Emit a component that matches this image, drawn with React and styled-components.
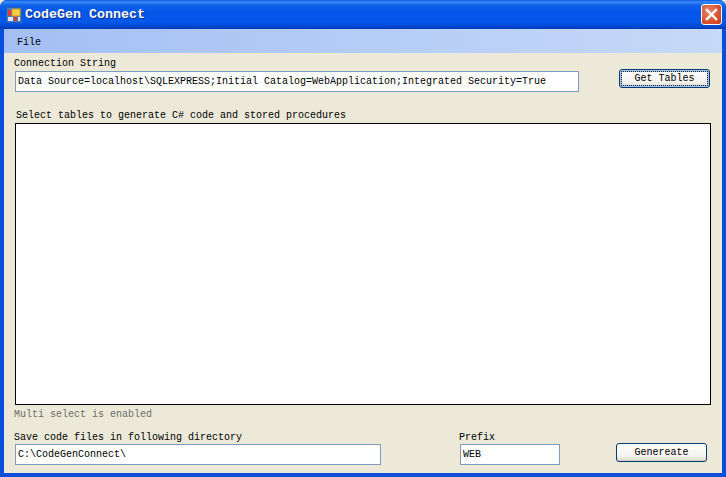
import React from 'react'
import styled, { createGlobalStyle } from 'styled-components'

const GlobalStyle = createGlobalStyle`
  html, body {
    margin: 0;
    padding: 0;
    background: #ece9d8;
    overflow: hidden;
  }
`

const AppIcon = () => (
  <svg width="16" height="16" viewBox="0 0 16 16">
    <rect x="0.5" y="0.5" width="15" height="15" fill="#3f7ad0" stroke="#2c5fb0" />
    <rect x="2" y="3" width="3" height="6" fill="#e23b2e" />
    <rect x="6" y="2" width="8" height="7" fill="#f8d040" stroke="#c89818" />
    <rect x="2" y="10" width="5" height="4" fill="#dfe8f5" />
    <rect x="8" y="10" width="3" height="4" fill="#e23b2e" />
    <rect x="12" y="10" width="2" height="4" fill="#dfe8f5" />
  </svg>
)

const App = () => {
  return (
    <Window>
      <GlobalStyle />
      <TitleBar>
        <AppIcon />
        <Title>CodeGen Connect</Title>
        <CloseButton>
          <svg width="21" height="21" viewBox="0 0 21 21">
            <path d="M6 6 L15 15 M15 6 L6 15" stroke="#fff" strokeWidth="2.4" strokeLinecap="square" />
          </svg>
        </CloseButton>
      </TitleBar>
      <Frame>
        <MenuBar>
          <MenuItem>File</MenuItem>
        </MenuBar>
        <Body>
          <Label>Connection String</Label>
          <TopRow>
            <TextBox $width={564} defaultValue="Data Source=localhost\SQLEXPRESS;Initial Catalog=WebApplication;Integrated Security=True" />
            <Button $focused>Get Tables</Button>
          </TopRow>
          <Label $indent={2} $top={17}>Select tables to generate C# code and stored procedures</Label>
          <TableList />
          <Hint>Multi select is enabled</Hint>
          <BottomRow>
            <Field>
              <Label>Save code files in following directory</Label>
              <TextBox $width={366} defaultValue="C:\CodeGenConnect\" />
            </Field>
            <PrefixField>
              <Label>Prefix</Label>
              <TextBox $width={100} defaultValue="WEB" />
            </PrefixField>
            <Button>Genereate</Button>
          </BottomRow>
        </Body>
      </Frame>
    </Window>
  )
}

export default App

const mono = `"Liberation Mono", "DejaVu Sans Mono", monospace`

const Window = styled.div`
  width: 726px;
  height: 477px;
  display: flex;
  flex-direction: column;
  background: #0a4fdc;
  border-radius: 7px 7px 0 0;
  overflow: hidden;
  font-family: ${mono};
  font-size: 10px;
  color: #000;
`

const TitleBar = styled.div`
  height: 29px;
  flex: none;
  box-sizing: border-box;
  display: flex;
  align-items: center;
  padding: 0 5px 0 6px;
  background: linear-gradient(
    to bottom,
    #0a57e0 0,
    #3b8cf8 2px,
    #0f62ea 5px,
    #0355e6 12px,
    #0358ea 22px,
    #0346cf 27px,
    #0336b0 29px
  );
`

const Title = styled.div`
  margin-left: 3px;
  flex: 1;
  font-size: 13.33px;
  font-weight: bold;
  color: #fff;
  text-shadow: 1px 1px 0 #0a2f90;
`

const CloseButton = styled.div`
  width: 21px;
  height: 21px;
  display: flex;
  border: 1px solid #fff;
  border-radius: 3px;
  margin: -1px -1px 0 0;
  background: radial-gradient(circle at 35% 35%, #e8856a, #d9522f 60%, #c23a18);
  box-sizing: border-box;

  svg {
    margin: -1px;
    flex: none;
  }
`

const Frame = styled.div`
  flex: 1;
  margin: 0 4px 4px;
  display: flex;
  flex-direction: column;
  background: #ece9d8;
`

const MenuBar = styled.div`
  height: 24px;
  flex: none;
  display: flex;
  align-items: center;
  padding-left: 13px;
  background: linear-gradient(to right, #a3bff4, #c6d9f8);
`

const MenuItem = styled.span`
  position: relative;
  top: 1px;
`

const Body = styled.div`
  flex: 1;
  display: flex;
  flex-direction: column;
  padding: 4px 11px 0 10px;
`

const Label = styled.div`
  height: 13px;
  line-height: 13px;
  margin-left: ${(p) => p.$indent || 0}px;
  margin-top: ${(p) => p.$top || 0}px;
  white-space: nowrap;
`

const TopRow = styled.div`
  display: flex;
  align-items: flex-start;
  padding-left: 1px;
  margin-top: 1px;

  button {
    margin: -2px 0 0 40px;
  }
`

const TextBox = styled.input`
  width: ${(p) => p.$width}px;
  height: 21px;
  box-sizing: border-box;
  border: 1px solid #7f9db9;
  padding: 0 2px;
  margin: 0;
  background: #fff;
  font-family: ${mono};
  font-size: 10px;
  color: #000;
  outline: none;
`

const Button = styled.button`
  width: 91px;
  height: 19px;
  padding: 0;
  border-radius: 3px;
  box-sizing: border-box;
  border: 1px solid #003c74;
  background: linear-gradient(to bottom, #fff, #f4f3ee 70%, #dcd8cc);
  font-family: ${mono};
  font-size: 10px;
  color: #000;
  box-shadow: ${(p) => (p.$focused ? 'inset 0 0 0 2px #a8c4ec' : 'inset 0 -1px 0 #d6d0c5')};
  outline: ${(p) => (p.$focused ? '1px dotted #222' : 'none')};
  outline-offset: -3px;
`

const TableList = styled.div`
  height: 282px;
  width: 696px;
  margin: 1px 0 0 1px;
  box-sizing: border-box;
  border: 1px solid #000;
  background: #fff;
`

const Hint = styled.div`
  height: 13px;
  line-height: 13px;
  margin-top: 3px;
  color: #6d6d6d;
`

const BottomRow = styled.div`
  display: flex;
  align-items: flex-end;
  margin-top: 10px;
`

const Field = styled.div`
  display: flex;
  flex-direction: column;
  align-items: flex-start;

  input {
    margin-left: 1px;
  }
`

const PrefixField = styled(Field)`
  margin-left: 78px;

  input {
    margin-left: 1px;
  }

  & + button {
    margin: 0 0 3px 56px;
  }
`
